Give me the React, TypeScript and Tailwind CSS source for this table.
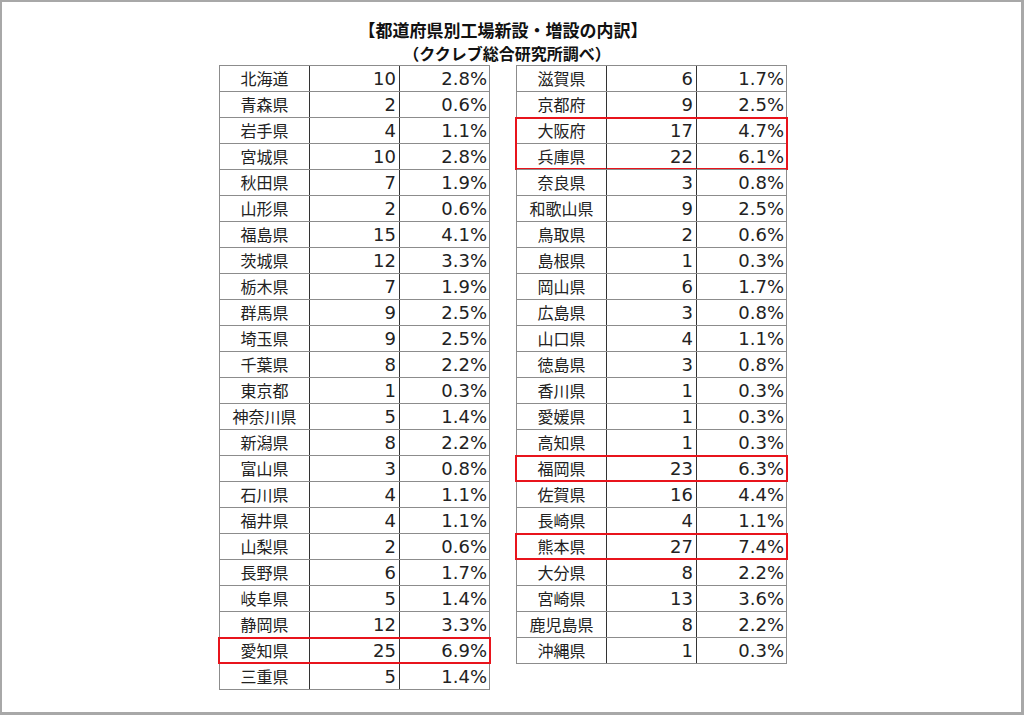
import React from "react";

type Row = { name: string; count: number; pct: string };

const leftRows: Row[] = [
  { name: "北海道", count: 10, pct: "2.8%" },
  { name: "青森県", count: 2, pct: "0.6%" },
  { name: "岩手県", count: 4, pct: "1.1%" },
  { name: "宮城県", count: 10, pct: "2.8%" },
  { name: "秋田県", count: 7, pct: "1.9%" },
  { name: "山形県", count: 2, pct: "0.6%" },
  { name: "福島県", count: 15, pct: "4.1%" },
  { name: "茨城県", count: 12, pct: "3.3%" },
  { name: "栃木県", count: 7, pct: "1.9%" },
  { name: "群馬県", count: 9, pct: "2.5%" },
  { name: "埼玉県", count: 9, pct: "2.5%" },
  { name: "千葉県", count: 8, pct: "2.2%" },
  { name: "東京都", count: 1, pct: "0.3%" },
  { name: "神奈川県", count: 5, pct: "1.4%" },
  { name: "新潟県", count: 8, pct: "2.2%" },
  { name: "富山県", count: 3, pct: "0.8%" },
  { name: "石川県", count: 4, pct: "1.1%" },
  { name: "福井県", count: 4, pct: "1.1%" },
  { name: "山梨県", count: 2, pct: "0.6%" },
  { name: "長野県", count: 6, pct: "1.7%" },
  { name: "岐阜県", count: 5, pct: "1.4%" },
  { name: "静岡県", count: 12, pct: "3.3%" },
  { name: "愛知県", count: 25, pct: "6.9%" },
  { name: "三重県", count: 5, pct: "1.4%" },
];

const rightRows: Row[] = [
  { name: "滋賀県", count: 6, pct: "1.7%" },
  { name: "京都府", count: 9, pct: "2.5%" },
  { name: "大阪府", count: 17, pct: "4.7%" },
  { name: "兵庫県", count: 22, pct: "6.1%" },
  { name: "奈良県", count: 3, pct: "0.8%" },
  { name: "和歌山県", count: 9, pct: "2.5%" },
  { name: "鳥取県", count: 2, pct: "0.6%" },
  { name: "島根県", count: 1, pct: "0.3%" },
  { name: "岡山県", count: 6, pct: "1.7%" },
  { name: "広島県", count: 3, pct: "0.8%" },
  { name: "山口県", count: 4, pct: "1.1%" },
  { name: "徳島県", count: 3, pct: "0.8%" },
  { name: "香川県", count: 1, pct: "0.3%" },
  { name: "愛媛県", count: 1, pct: "0.3%" },
  { name: "高知県", count: 1, pct: "0.3%" },
  { name: "福岡県", count: 23, pct: "6.3%" },
  { name: "佐賀県", count: 16, pct: "4.4%" },
  { name: "長崎県", count: 4, pct: "1.1%" },
  { name: "熊本県", count: 27, pct: "7.4%" },
  { name: "大分県", count: 8, pct: "2.2%" },
  { name: "宮崎県", count: 13, pct: "3.6%" },
  { name: "鹿児島県", count: 8, pct: "2.2%" },
  { name: "沖縄県", count: 1, pct: "0.3%" },
];

// 赤枠で囲む行（開始行 -> 行数）
const leftMarks: Record<number, number> = { 22: 1 };
const rightMarks: Record<number, number> = { 2: 2, 15: 1, 18: 1 };

const numFont = { fontFamily: '"DejaVu Sans", "Noto Sans CJK JP", sans-serif' };

function PrefTable({ rows, marks }: { rows: Row[]; marks: Record<number, number> }) {
  return (
    <div className="w-[271px] border-t border-l border-r border-[#8c8c8c]">
      {rows.map((r, i) => (
        <div key={r.name} className="relative flex h-[26px] border-b border-[#8c8c8c] text-[16px] leading-[25px] text-[#222]">
          <div className="w-[90px] border-r border-[#333] text-center">{r.name}</div>
          <div className="w-[90px] border-r border-[#333] pr-[3px] text-right text-[18px]" style={numFont}>
            {r.count}
          </div>
          <div className="flex-1 pr-[2px] text-right text-[18px]" style={numFont}>
            {r.pct}
          </div>
          {marks[i] && (
            <div
              className={
                "absolute left-[-2px] right-[-2px] top-[-1px] border-2 border-[#e8141c] " +
                (marks[i] === 2 ? "h-[53px]" : "h-[27px]")
              }
            />
          )}
        </div>
      ))}
    </div>
  );
}

export default function App() {
  return (
    <div
      className="h-[715px] w-[1024px] overflow-hidden border-t-2 border-l-2 border-r-[3px] border-b-[3px] border-[#a8a8a8] bg-white"
      style={{ fontFamily: '"Noto Sans CJK JP", "Noto Sans", sans-serif' }}
    >
      <div className="ml-[217px] flex w-[568px] flex-col items-center">
        <h1 className="mt-[17px] text-[17px] leading-[22px] font-bold text-[#111]">
          【都道府県別工場新設・増設の内訳】
        </h1>
        <p className="mt-[1px] pl-[8px] text-[16px] leading-[22px] font-bold text-[#111]">
          （ククレブ総合研究所調べ）
        </p>
        <div className="mt-[1px] flex w-full items-start justify-between">
          <PrefTable rows={leftRows} marks={leftMarks} />
          <PrefTable rows={rightRows} marks={rightMarks} />
        </div>
      </div>
    </div>
  );
}
